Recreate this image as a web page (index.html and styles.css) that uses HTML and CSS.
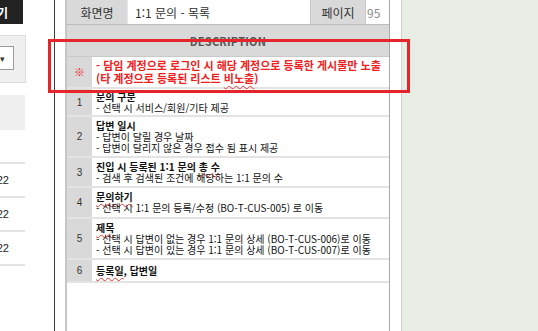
FILE: index.html
```html
<!DOCTYPE html>
<html lang="ko">
<head>
<meta charset="utf-8">
<title>1:1 문의 - 목록</title>
<link rel="stylesheet" href="styles.css">
</head>
<body>
  <aside class="side">
    <div class="btn"><span>목록 보기</span></div>
    <div class="filter">
      <div class="select"><span class="caret">▾</span></div>
    </div>
    <div class="list-head"></div>
    <div class="list-row"></div>
    <div class="list-row"><span>2023-01-22</span></div>
    <div class="list-row"><span>2023-01-22</span></div>
    <div class="list-row"><span>2023-01-22</span></div>
  </aside>

  <div class="gap"></div>
  <div class="split"></div>

  <main class="doc">
    <section class="sheet">
      <div class="meta">
        <div class="label lbl-name">화면명</div>
        <div class="value title">1:1 문의 - 목록</div>
        <div class="label lbl-page">페이지</div>
        <div class="value page">95</div>
      </div>
      <div class="desc-head">DESCRIPTION</div>

      <div class="row note">
        <div class="no">※</div>
        <div class="txt">- 담임 계정으로 로그인 시 해당 계정으로 등록한 게시물만 노출<br>(타 계정으로 등록된 리스트 <span class="sp">비노출</span>)</div>
      </div>
      <div class="row r1">
        <div class="no">1</div>
        <div class="txt"><b>문의 구분</b><br>- 선택 시 서비스/회원/기타 제공</div>
      </div>
      <div class="row">
        <div class="no">2</div>
        <div class="txt"><b>답변 일시</b><br>- 답변이 달릴 경우 날짜<br>- 답변이 달리지 않은 경우 접수 됨 표시 제공</div>
      </div>
      <div class="row">
        <div class="no">3</div>
        <div class="txt"><b>진입 시 등록된 1:1 문의 <span class="sp">총 수</span></b><br>- 검색 후 검색된 조건에 해당하는 1:1 문의 수</div>
      </div>
      <div class="row r4">
        <div class="no">4</div>
        <div class="txt"><b class="sp">문의하기</b><br>- 선택 시 1:1 문의 등록/수정 (BO-T-CUS-005) 로 이동</div>
      </div>
      <div class="row">
        <div class="no">5</div>
        <div class="txt"><b class="sp">제목</b><br>- 선택 시 답변이 없는 경우 1:1 문의 상세 (BO-T-CUS-006)로 이동<br>- 선택 시 답변이 있는 경우 1:1 문의 상세 (BO-T-CUS-007)로 이동</div>
      </div>
      <div class="row r6">
        <div class="no">6</div>
        <div class="txt"><b><span class="sp">등록일</span>, 답변일</b></div>
      </div>
    </section>

    <div class="mark"></div>
  </main>

  <div class="canvas"></div>
</body>
</html>
```

FILE: styles.css
```css
* { box-sizing: border-box; }

html, body {
  margin: 0;
  padding: 0;
}

body {
  width: 538px;
  height: 331px;
  overflow: hidden;
  display: flex;
  background: #fff;
  font-family: "Noto Sans CJK KR", "Noto Sans", sans-serif;
  color: #111;
}

/* cropped list page on the left */
.side {
  width: 26px;
  flex: none;
  overflow: hidden;
  display: flex;
  flex-direction: column;
}

.btn {
  height: 24px;
  width: 23px;
  background: #222;
  color: #fff;
  font-size: 12px;
  font-weight: 700;
  display: flex;
  justify-content: flex-end;
  align-items: center;
  padding-right: 15px;
  white-space: nowrap;
  overflow: hidden;
}

.filter {
  margin-top: 11px;
  height: 48px;
  background: #f0f0f0;
  border: 1px solid #dcdcdc;
  border-left: none;
  padding-top: 10px;
  overflow: hidden;
}

.select {
  width: 14px;
  height: 24px;
  background: #fff;
  border: 1px solid #9a9a9a;
  border-left: none;
  display: flex;
  align-items: center;
  font-size: 9px;
  color: #333;
}

.caret {
  line-height: 1;
}

.list-head {
  margin-top: 12px;
  height: 35px;
  width: 25px;
  background: #efefef;
}

.list-row {
  height: 34px;
  width: 25px;
  border-bottom: 2px solid #e2e2e2;
  display: flex;
  justify-content: flex-end;
  align-items: center;
  padding-right: 16px;
  font-family: "Liberation Sans", sans-serif;
  font-size: 11px;
  color: #222;
  white-space: nowrap;
  overflow: hidden;
}

.gap {
  width: 28px;
  flex: none;
}

.split {
  width: 1px;
  flex: none;
  background: #3c3c3c;
}

/* spec document */
.doc {
  position: relative;
  width: 347px;
  flex: none;
  padding-left: 10px;
  padding-right: 11px;
  border-right: 1px solid #cfd2cd;
  display: flex;
}

.sheet {
  width: 325px;
  border-left: 2px solid #c6c6c6;
  border-right: 1px solid #a9a9a9;
  font-size: 10px;
}

.meta {
  display: grid;
  grid-template-columns: 61px 182px 56px 1fr;
  height: 25px;
  border-bottom: 1px solid #bdbdbd;
}

.label {
  background: #d9d9d9;
  color: #333;
  font-size: 12px;
  display: flex;
  align-items: center;
  justify-content: center;
  border-right: 1px solid #e8e8e8;
}

.lbl-page {
  border-left: 1px solid #c8c8c8;
  border-right: 1px solid #c8c8c8;
}

.value {
  display: flex;
  align-items: center;
  font-size: 12px;
  color: #333;
}

.title { padding-left: 7px; }

.page {
  padding-left: 1px;
  color: #8a8a8a;
}

.desc-head {
  height: 32px;
  background: #d9d9d9;
  border-bottom: 1px solid #c9c9c9;
  display: flex;
  align-items: center;
  justify-content: center;
  font-size: 11px;
  font-weight: 700;
  color: #555;
  letter-spacing: 0.2px;
}

.row {
  display: grid;
  grid-template-columns: 25px 1fr;
  border-bottom: 2px solid #e3e3e3;
}

.no {
  background: #d9d9d9;
  display: flex;
  align-items: center;
  justify-content: center;
  font-family: "Liberation Sans", sans-serif;
  font-size: 10px;
  color: #333;
}

.txt {
  padding: 3px 0 3px 4px;
  line-height: 11px;
  white-space: nowrap;
}

.txt b { font-weight: 700; }

.note .no {
  color: #e22;
  font-size: 11px;
}

.note .txt {
  padding: 2px 0 2px 4px;
  line-height: 13px;
  font-size: 11px;
  color: #f02020;
  font-weight: 700;
}

.r1 .txt { padding-top: 2px; padding-bottom: 2px; }

.r4 .txt { padding-bottom: 4px; }

.r6 .txt {
  padding-top: 5px;
  padding-bottom: 5px;
}

/* spell-check squiggle */
.sp {
  text-decoration: underline wavy #e03a3a;
  text-decoration-thickness: 1px;
  text-underline-offset: 2px;
}

/* review annotation box */
.mark {
  position: absolute;
  left: -7px;
  top: 39px;
  width: 362px;
  height: 54px;
  border: 3px solid #e4262b;
}

.canvas {
  flex: 1;
  background: #e8ede6;
}
```
